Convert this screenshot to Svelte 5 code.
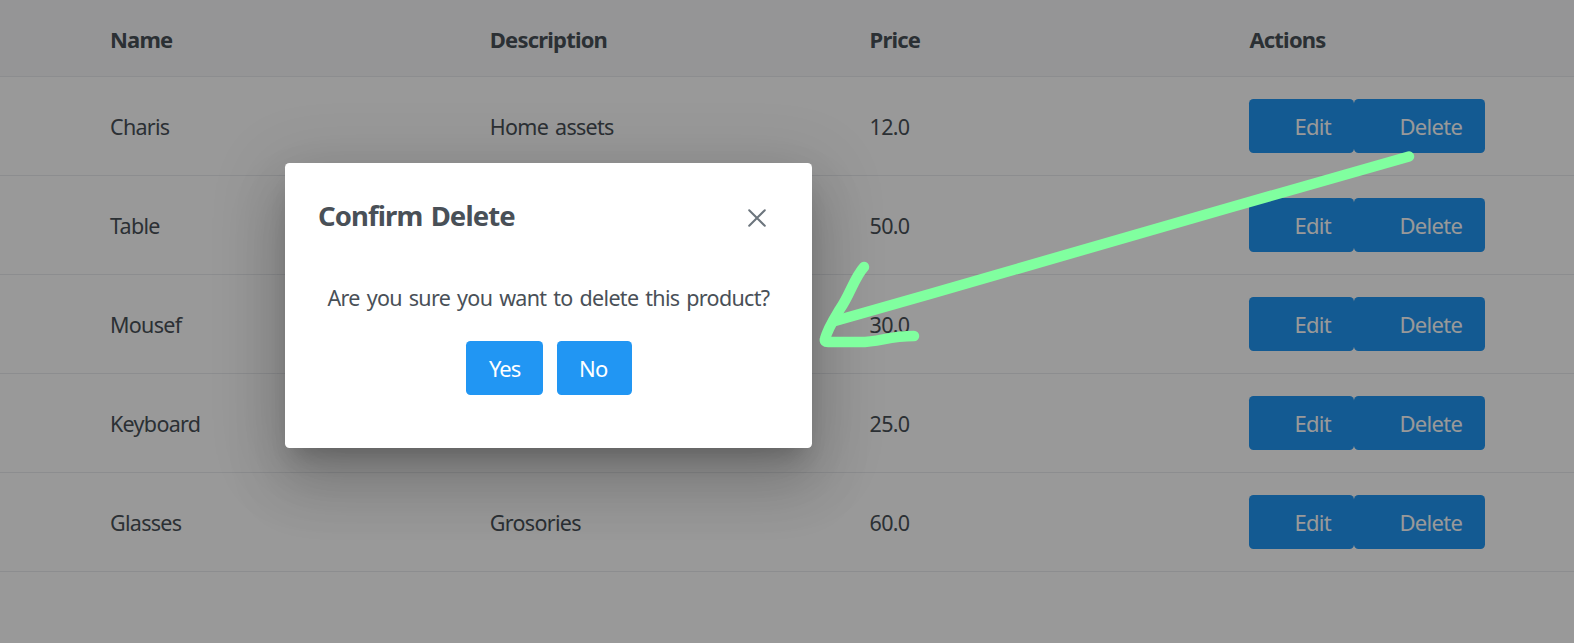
<script>
  const columns = ['Name', 'Description', 'Price', 'Actions'];
  const products = [
    { name: 'Charis', description: 'Home assets', price: '12.0' },
    { name: 'Table', description: '', price: '50.0' },
    { name: 'Mousef', description: '', price: '30.0' },
    { name: 'Keyboard', description: '', price: '25.0' },
    { name: 'Glasses', description: 'Grosories', price: '60.0' }
  ];
</script>

<div class="page">
  <div class="table">
    <div class="row head">
      {#each columns as column}
        <div class="cell">{column}</div>
      {/each}
    </div>
    {#each products as product}
      <div class="row">
        <div class="cell text">{product.name}</div>
        <div class="cell text">{product.description}</div>
        <div class="cell text">{product.price}</div>
        <div class="cell actions">
          <button class="btn edit">Edit</button>
          <button class="btn delete">Delete</button>
        </div>
      </div>
    {/each}
  </div>

  <div class="mask"></div>

  <div class="dialog" role="dialog" aria-labelledby="title">
    <header>
      <h2 id="title">Confirm Delete</h2>
      <button class="close" aria-label="Close">
        <svg width="18" height="18" viewBox="0 0 18 18">
          <path d="M1.2 1.2 16.8 16.8M16.8 1.2 1.2 16.8" />
        </svg>
      </button>
    </header>
    <p>Are you sure you want to delete this product?</p>
    <div class="choices">
      <button class="btn yes">Yes</button>
      <button class="btn no">No</button>
    </div>
  </div>

  <svg class="arrow" width="1574" height="643" viewBox="0 0 1574 643">
    <path d="M1409 156.5L1230 207.5L930 294L835 321" />
    <path d="M864 267C854 278 850 295 840 309C834 319 828 328 825 339Q824 342 828 342L860 342C880 342 888 336 914 336" />
  </svg>
</div>

<style>
  :global(body) {
    overflow: hidden;
  }
  .page {
    position: relative;
    width: 1574px;
    height: 643px;
    overflow: hidden;
    background: #fff;
    color: #495057;
    font-family: 'Noto Sans', 'Open Sans', sans-serif;
    font-size: 21.5px;
    letter-spacing: -0.7px;
    word-spacing: 2px;
  }
  .row {
    display: grid;
    grid-template-columns: repeat(4, 379.8px);
    box-sizing: border-box;
    height: 99px;
    padding-left: 88px;
    align-items: center;
    border-bottom: 1px solid #e9ecef;
  }
  .head {
    height: 77px;
    padding-top: 2px;
    background: #f8f9fa;
    font-weight: 700;
    font-size: 22px;
    letter-spacing: -0.8px;
  }
  .cell {
    padding-left: 22px;
    white-space: nowrap;
    line-height: 30px;
  }
  .text {
    padding-top: 2px;
  }
  .actions {
    display: flex;
  }
  .btn {
    height: 54px;
    padding: 0;
    border: 0;
    border-radius: 4.5px;
    background: #2196f3;
    color: #fff;
    font: inherit;
    font-size: 22px;
    letter-spacing: -0.7px;
    line-height: 30px;
    text-align: left;
  }
  .edit {
    width: 105px;
    padding-left: 45px;
  }
  .delete {
    width: 131px;
    padding-left: 45px;
  }
  .mask {
    position: absolute;
    inset: 0;
    background: rgba(0, 0, 0, 0.4);
  }
  .dialog {
    position: absolute;
    left: 285px;
    top: 163px;
    width: 527px;
    height: 285px;
    box-sizing: border-box;
    padding: 33px;
    border-radius: 4.5px;
    background: #fff;
    box-shadow:
      0 16px 22px -10px rgba(0, 0, 0, 0.2),
      0 36px 57px 4px rgba(0, 0, 0, 0.14),
      0 13px 69px 12px rgba(0, 0, 0, 0.12);
  }
  header {
    display: flex;
    justify-content: space-between;
    height: 44px;
  }
  h2 {
    margin: 0;
    font-size: 27.5px;
    line-height: 40px;
    font-weight: 700;
    letter-spacing: -0.9px;
  }
  .close {
    display: flex;
    width: 44px;
    height: 44px;
    padding: 0;
    border: 0;
    background: none;
    align-items: center;
    justify-content: center;
  }
  .close path {
    fill: none;
    stroke: #6c757d;
    stroke-width: 2;
    stroke-linecap: round;
  }
  p {
    margin: 43px 0 0 9.5px;
    line-height: 30px;
    white-space: nowrap;
    letter-spacing: -0.69px;
  }
  .choices {
    display: flex;
    gap: 14px;
    margin: 28px 0 0 148px;
  }
  .yes {
    width: 77px;
    padding-left: 23px;
    letter-spacing: -1px;
  }
  .no {
    width: 75px;
    padding-left: 22px;
  }
  .arrow {
    position: absolute;
    inset: 0;
  }
  .arrow path {
    fill: none;
    stroke: #80ff9f;
    stroke-width: 10.5;
    stroke-linecap: round;
    stroke-linejoin: round;
  }
</style>
